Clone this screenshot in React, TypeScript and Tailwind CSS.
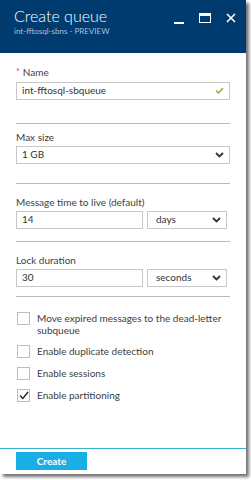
import { ReactNode } from "react";

const Chevron = () => (
  <svg width="9" height="6" viewBox="0 0 9 6" className="shrink-0">
    <path d="M1 1l3.5 3.5L8 1" stroke="#333" strokeWidth="1.8" fill="none" />
  </svg>
);

const Divider = () => <div className="h-px bg-[#b9b9b9]" />;

const Label = ({ children }: { children: ReactNode }) => (
  <div className="text-[10px] leading-[12px] text-[#404040]">{children}</div>
);

const Box = ({ children, className = "" }: { children: ReactNode; className?: string }) => (
  <div
    className={`flex h-[18px] items-center justify-between border border-[#c8c8c8] bg-white px-[5px] text-[10px] text-[#333] ${className}`}
  >
    {children}
  </div>
);

const Check = ({ label, checked = false }: { label: ReactNode; checked?: boolean }) => (
  <div className="flex items-start gap-[7px]">
    <div className="mt-[1px] flex h-[13px] w-[13px] shrink-0 items-center justify-center border border-[#bdbdbd] bg-white">
      {checked && (
        <svg width="10" height="9" viewBox="0 0 10 9">
          <path d="M1 4.5l2.8 3L9 1" stroke="#222" strokeWidth="1.4" fill="none" />
        </svg>
      )}
    </div>
    <div className="whitespace-nowrap pt-[1px] text-[10px] leading-[12px] text-[#404040]">{label}</div>
  </div>
);

const App = () => {
  return (
    <div
      className="h-[480px] w-[251px] bg-white"
      style={{ fontFamily: 'Lato, "Open Sans", sans-serif' }}
    >
      <div className="flex h-[474px] w-[246px] flex-col bg-white shadow-[3px_3px_3px_rgba(0,0,0,0.55)]">
        <header className="flex h-[53px] shrink-0 justify-between bg-[#003b6f] pl-[14px] pr-[10px] pt-[6px]">
          <div>
            <div className="text-[16px] font-light leading-[20px] text-white">Create queue</div>
            <div className="text-[8px] leading-[10px] text-[#a9c0d8]">int-fftosql-sbns - PREVIEW</div>
          </div>
          <div className="flex items-start gap-[15px] pt-[7px]">
            <div className="mt-[9px] h-[2px] w-[10px] bg-white" />
            <div className="h-[10px] w-[12px] border-[1.5px] border-t-[3px] border-white" />
            <svg width="10" height="10" viewBox="0 0 10 10">
              <path d="M1 1l8 8M9 1l-8 8" stroke="white" strokeWidth="1.6" />
            </svg>
          </div>
        </header>

        <div className="flex flex-1 flex-col px-[16px] pt-[12px]">
          <div className="flex items-center gap-[3px]">
            <span className="text-[9px] text-[#d9352f]">*</span>
            <Label>Name</Label>
          </div>
          <Box className="mt-[3px]">
            <span>int-fftosql-sbqueue</span>
            <svg width="9" height="7" viewBox="0 0 9 7">
              <path d="M1 3.5l2.5 2.5L8 1" stroke="#7fb03a" strokeWidth="1.4" fill="none" />
            </svg>
          </Box>
          <div className="mt-[23px]">
            <Divider />
          </div>

          <div className="mt-[7px]">
            <Label>Max size</Label>
          </div>
          <Box className="mt-[3px]">
            <span>1 GB</span>
            <Chevron />
          </Box>
          <div className="mt-[19px]">
            <Divider />
          </div>

          <div className="mt-[12px]">
            <Label>Message time to live (default)</Label>
          </div>
          <div className="mt-[3px] flex gap-[4px] pr-[3px]">
            <Box className="flex-1">
              <span>14</span>
            </Box>
            <Box className="w-[80px] pl-[8px]">
              <span>days</span>
              <Chevron />
            </Box>
          </div>
          <div className="mt-[12px]">
            <Divider />
          </div>

          <div className="mt-[12px]">
            <Label>Lock duration</Label>
          </div>
          <div className="mt-[3px] flex gap-[4px] pr-[3px]">
            <Box className="flex-1">
              <span>30</span>
            </Box>
            <Box className="w-[80px] pl-[8px]">
              <span>seconds</span>
              <Chevron />
            </Box>
          </div>
          <div className="mt-[9px]">
            <Divider />
          </div>

          <div className="mt-[14px] flex flex-col gap-[8px] pl-[1px]">
            <Check
              label={
                <>
                  Move expired messages to the dead-letter
                  <br />
                  subqueue
                </>
              }
            />
            <Check label="Enable duplicate detection" />
            <Check label="Enable sessions" />
            <Check label="Enable partitioning" checked />
          </div>
        </div>

        <div className="h-px bg-[#3ab2c9]" />
        <div className="flex h-[25px] items-start px-[16px] pt-[3px]">
          <button className="h-[18px] w-[71px] bg-[#1aaee6] text-[10px] font-bold text-white">
            Create
          </button>
        </div>
      </div>
    </div>
  );
};

export default App;
